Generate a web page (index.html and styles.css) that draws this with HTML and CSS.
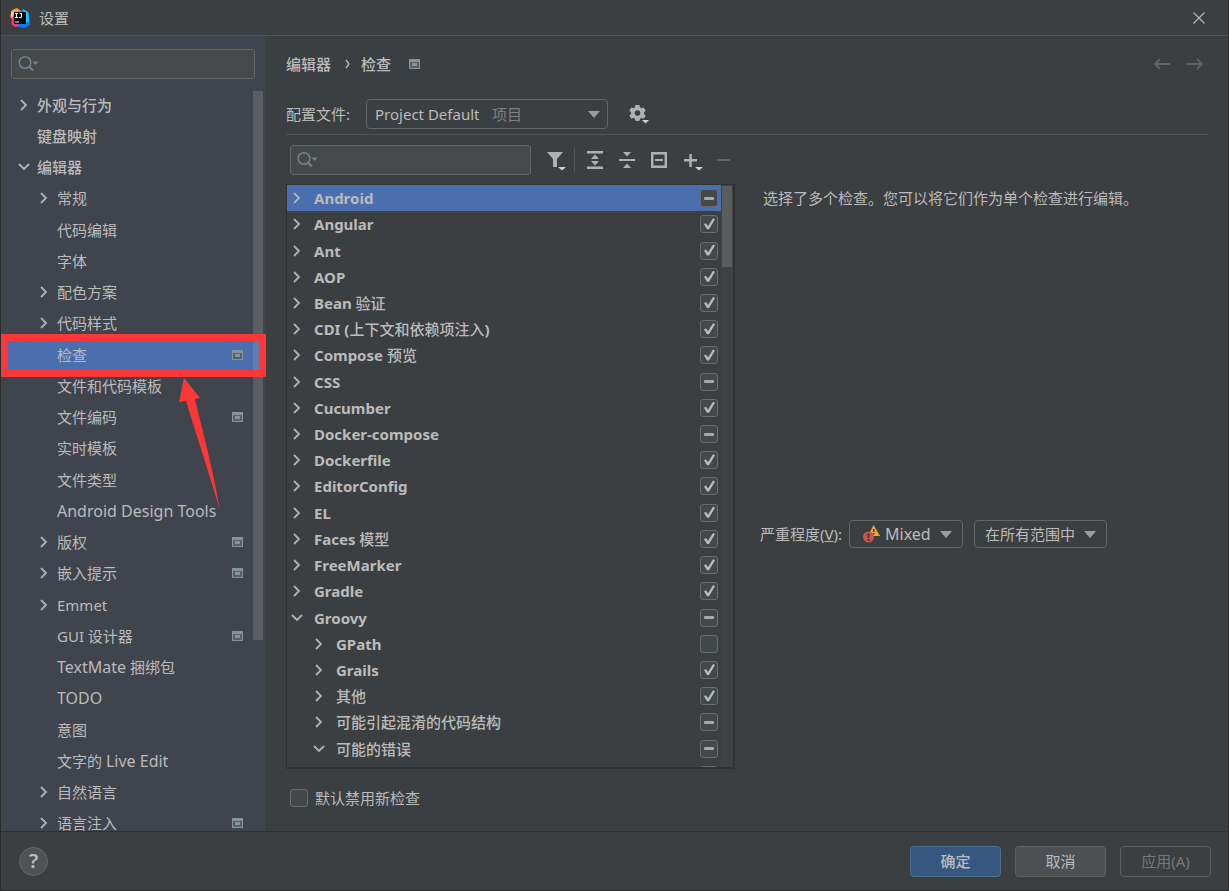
FILE: index.html
```html
<!DOCTYPE html>
<html lang="zh-CN">
<head>
<meta charset="utf-8">
<title>设置</title>
<link rel="stylesheet" href="styles.css">
</head>
<body>
<svg class="defs" aria-hidden="true">
  <symbol id="right" viewBox="0 0 16 16"><path d="M5 3l5 5-5 5" fill="none" stroke="currentColor" stroke-width="1.800"/></symbol>
  <symbol id="down" viewBox="0 0 16 16"><path d="M3 5l5 5 5-5" fill="none" stroke="currentColor" stroke-width="1.800"/></symbol>
  <symbol id="project" viewBox="0 0 11 10"><path d="M0 0h11v10H0z" fill="#87939a"/><path d="M1 3h9v6H1z" fill="#56616a"/><path d="M3 4h5v3H3z" fill="#87939a"/></symbol>
  <symbol id="search" viewBox="0 0 22 18"><circle cx="7" cy="7.500" r="5.800" fill="none" stroke="currentColor" stroke-width="1.500"/><path d="M11 11.500l4 4" stroke="currentColor" stroke-width="2"/><path d="M14.500 6.500h6l-3 3.500z" fill="currentColor"/></symbol>
  <symbol id="arrow" viewBox="0 0 12 7"><path d="M0 0h12L6 7z" fill="#9a9da0"/></symbol>
</svg>
<div class="window">
  <header class="titlebar">
    <svg class="logo" viewBox="0 0 20 20" aria-hidden="true">
      <path d="M2 2l5-2 4 3-2 8-9-2z" fill="#fb9b3a"/><path d="M0 8l5-3 5 8 1 5-6 1-4-3 1-3z" fill="#ff2d72"/><path d="M1 3l3 2-1 4-2 1z" fill="#ffd35a"/><path d="M10 4l3-3 6 4 1 12-5 3-7-1z" fill="#087cfa"/><path d="M13 1l5 3 1 9-4 2z" fill="#23c5f4"/><path d="M4 4h12v12H4z" fill="#080609"/>
      <path d="M5 5.500h3M6.500 5.500v4M5 9.500h3M9.500 5.500h2v3q0 1.500-2.500 1M5 14h4" fill="none" stroke="#fff" stroke-width="1.100"/>
    </svg>
    <h1 class="title">设置</h1>
    <button class="icon-button close" aria-label="关闭"><svg width="12" height="12" viewBox="0 0 12 12"><path d="M.5.500l11 11M11.500.500l-11 11" stroke="#b4b4b4" stroke-width="1.200"/></svg></button>
  </header>

  <nav class="sidebar" aria-label="设置类别">
    <div class="search sidebar-search"><svg class="search-icon"><use href="#search"/></svg><input type="text" aria-label="搜索设置"></div>
    <div class="sidebar-scroll">
      <ul class="categories">
        <li class="cat top"><svg class="chev"><use href="#right"/></svg><span>外观与行为</span></li>
        <li class="cat top"><i class="chev"></i><span>键盘映射</span></li>
        <li class="cat top"><svg class="chev"><use href="#down"/></svg><span>编辑器</span></li>
        <li class="cat"><svg class="chev"><use href="#right"/></svg><span>常规</span></li>
        <li class="cat"><i class="chev"></i><span>代码编辑</span></li>
        <li class="cat"><i class="chev"></i><span>字体</span></li>
        <li class="cat"><svg class="chev"><use href="#right"/></svg><span>配色方案</span></li>
        <li class="cat"><svg class="chev"><use href="#right"/></svg><span>代码样式</span></li>
        <li class="cat selected"><i class="chev"></i><span>检查</span><svg class="project"><use href="#project"/></svg></li>
        <li class="cat"><i class="chev"></i><span>文件和代码模板</span></li>
        <li class="cat"><i class="chev"></i><span>文件编码</span><svg class="project"><use href="#project"/></svg></li>
        <li class="cat"><i class="chev"></i><span>实时模板</span></li>
        <li class="cat"><i class="chev"></i><span>文件类型</span></li>
        <li class="cat"><i class="chev"></i><span class="latin">Android Design Tools</span></li>
        <li class="cat"><svg class="chev"><use href="#right"/></svg><span>版权</span><svg class="project"><use href="#project"/></svg></li>
        <li class="cat"><svg class="chev"><use href="#right"/></svg><span>嵌入提示</span><svg class="project"><use href="#project"/></svg></li>
        <li class="cat"><svg class="chev"><use href="#right"/></svg><span>Emmet</span></li>
        <li class="cat"><i class="chev"></i><span>GUI 设计器</span><svg class="project"><use href="#project"/></svg></li>
        <li class="cat"><i class="chev"></i><span><span class="latin">TextMate</span> 捆绑包</span></li>
        <li class="cat"><i class="chev"></i><span class="latin">TODO</span></li>
        <li class="cat"><i class="chev"></i><span>意图</span></li>
        <li class="cat"><i class="chev"></i><span>文字的 <span class="latin">Live Edit</span></span></li>
        <li class="cat"><svg class="chev"><use href="#right"/></svg><span>自然语言</span></li>
        <li class="cat"><svg class="chev"><use href="#right"/></svg><span>语言注入</span><svg class="project"><use href="#project"/></svg></li>
      </ul>
      <div class="sidebar-thumb"></div>
    </div>
  </nav>

  <main class="content">
    <div class="crumbs">
      <span>编辑器</span>
      <svg width="6" height="10" viewBox="0 0 6 10"><path d="M1 1l3 4-3 4" fill="none" stroke="#bbb" stroke-width="1.300"/></svg>
      <span>检查</span>
      <svg class="project crumb-project"><use href="#project"/></svg>
      <div class="history">
        <button class="icon-button" aria-label="后退" disabled><svg width="17" height="12" viewBox="0 0 17 12"><path d="M17 6H2M7 1L2 6l5 5" fill="none" stroke="#616365" stroke-width="2"/></svg></button>
        <button class="icon-button" aria-label="前进" disabled><svg width="17" height="12" viewBox="0 0 17 12"><path d="M0 6h15M10 1l5 5-5 5" fill="none" stroke="#616365" stroke-width="2"/></svg></button>
      </div>
    </div>

    <div class="profile">
      <label for="profile">配置文件:</label>
      <div class="combo profile-combo">
        <select id="profile"><option>Project Default</option></select>
        <span class="combo-hint">项目</span>
        <svg class="combo-arrow"><use href="#arrow"/></svg>
      </div>
      <button class="icon-button" aria-label="配置文件操作"><svg width="22" height="20" viewBox="0 0 22 20"><path fill="#afb1b3" fill-rule="evenodd" d="M6.500 1h4l.5 2.300 1.500.9 2.300-.8 1.900 3.300-1.700 1.500v1.700l1.700 1.500-1.900 3.300-2.300-.8-1.500.9-.5 2.200h-4L6 14.800l-1.500-.9-2.300.8L.3 11.400 2 9.900V8.200L.3 6.700l1.900-3.300 2.300.8L6 3.300zM8.500 6.200a2.800 2.800 0 100 5.600 2.800 2.800 0 000-5.600z"/><path d="M12 15.500h9l-4.500 4.500z" fill="#d0d2d3" stroke="#3c3f41"/></svg></button>
    </div>

    <div class="workspace">
      <section class="inspections">
        <div class="toolbar">
          <div class="search filter"><svg class="search-icon"><use href="#search"/></svg><input type="text" aria-label="搜索检查"></div>
          <button class="icon-button funnel" aria-label="过滤"><svg width="20" height="20" viewBox="0 0 20 20"><path d="M0 2h16l-6 7v8H6V9z" fill="#afb1b3"/><path d="M11 17h8l-4 3.500z" fill="#d0d2d3"/></svg></button>
          <span class="separator"></span>
          <button class="icon-button" aria-label="全部展开"><svg width="16" height="18" viewBox="0 0 16 18"><path d="M0 0h16v2.500H0zM0 15.500h16V18H0zM8 3.500l4 4.500H4zM8 14.500l4-4.500H4z" fill="#afb1b3"/></svg></button>
          <button class="icon-button" aria-label="全部折叠"><svg width="16" height="18" viewBox="0 0 16 18"><path d="M0 8h16v2H0zM4 1h8L8 5.500zM4 17h8L8 12.500z" fill="#afb1b3"/></svg></button>
          <button class="icon-button" aria-label="重置为空"><svg width="16" height="16" viewBox="0 0 16 16"><path d="M1.200 1.200h13.600v13.600H1.200z" fill="none" stroke="#afb1b3" stroke-width="2.400"/><path d="M4 7h8v2H4z" fill="#afb1b3"/></svg></button>
          <button class="icon-button add" aria-label="添加"><svg width="19" height="20" viewBox="0 0 19 20"><path d="M0 9h13v2.500H0zM5.300 4h2.500v13H5.300z" fill="#afb1b3"/><path d="M11 17h8l-4 3.500z" fill="#d0d2d3"/></svg></button>
          <button class="icon-button" aria-label="移除" disabled><svg width="13" height="2" viewBox="0 0 13 2"><path d="M0 0h13v2H0z" fill="#616365"/></svg></button>
        </div>

        <div class="tree-box">
          <ul class="tree">
            <li class="row selected"><svg class="chev"><use href="#right"/></svg><label for="i1">Android</label><input id="i1" type="checkbox" class="box mixed"></li>
            <li class="row"><svg class="chev"><use href="#right"/></svg><label for="i2">Angular</label><input id="i2" type="checkbox" class="box" checked></li>
            <li class="row"><svg class="chev"><use href="#right"/></svg><label for="i3">Ant</label><input id="i3" type="checkbox" class="box" checked></li>
            <li class="row"><svg class="chev"><use href="#right"/></svg><label for="i4">AOP</label><input id="i4" type="checkbox" class="box" checked></li>
            <li class="row"><svg class="chev"><use href="#right"/></svg><label for="i5">Bean <span class="cjk">验证</span></label><input id="i5" type="checkbox" class="box" checked></li>
            <li class="row"><svg class="chev"><use href="#right"/></svg><label for="i6">CDI (<span class="cjk">上下文和依赖项注入</span>)</label><input id="i6" type="checkbox" class="box" checked></li>
            <li class="row"><svg class="chev"><use href="#right"/></svg><label for="i7">Compose <span class="cjk">预览</span></label><input id="i7" type="checkbox" class="box" checked></li>
            <li class="row"><svg class="chev"><use href="#right"/></svg><label for="i8">CSS</label><input id="i8" type="checkbox" class="box mixed"></li>
            <li class="row"><svg class="chev"><use href="#right"/></svg><label for="i9">Cucumber</label><input id="i9" type="checkbox" class="box" checked></li>
            <li class="row"><svg class="chev"><use href="#right"/></svg><label for="i10">Docker-compose</label><input id="i10" type="checkbox" class="box mixed"></li>
            <li class="row"><svg class="chev"><use href="#right"/></svg><label for="i11">Dockerfile</label><input id="i11" type="checkbox" class="box" checked></li>
            <li class="row"><svg class="chev"><use href="#right"/></svg><label for="i12">EditorConfig</label><input id="i12" type="checkbox" class="box" checked></li>
            <li class="row"><svg class="chev"><use href="#right"/></svg><label for="i13">EL</label><input id="i13" type="checkbox" class="box" checked></li>
            <li class="row"><svg class="chev"><use href="#right"/></svg><label for="i14">Faces <span class="cjk">模型</span></label><input id="i14" type="checkbox" class="box" checked></li>
            <li class="row"><svg class="chev"><use href="#right"/></svg><label for="i15">FreeMarker</label><input id="i15" type="checkbox" class="box" checked></li>
            <li class="row"><svg class="chev"><use href="#right"/></svg><label for="i16">Gradle</label><input id="i16" type="checkbox" class="box" checked></li>
            <li class="row"><svg class="chev"><use href="#down"/></svg><label for="i17">Groovy</label><input id="i17" type="checkbox" class="box mixed"></li>
            <li class="row child"><svg class="chev"><use href="#right"/></svg><label for="i18">GPath</label><input id="i18" type="checkbox" class="box"></li>
            <li class="row child"><svg class="chev"><use href="#right"/></svg><label for="i19">Grails</label><input id="i19" type="checkbox" class="box" checked></li>
            <li class="row child"><svg class="chev"><use href="#right"/></svg><label for="i20" class="cjk">其他</label><input id="i20" type="checkbox" class="box" checked></li>
            <li class="row child"><svg class="chev"><use href="#right"/></svg><label for="i21" class="cjk">可能引起混淆的代码结构</label><input id="i21" type="checkbox" class="box mixed"></li>
            <li class="row child"><svg class="chev"><use href="#down"/></svg><label for="i22" class="cjk">可能的错误</label><input id="i22" type="checkbox" class="box mixed"></li>
            <li class="row child"><label></label><input type="checkbox" class="box" aria-label="检查项"></li>
          </ul>
          <div class="track"><div class="thumb"></div></div>
        </div>

        <div class="disable-new"><input id="disable-new" type="checkbox" class="box"><label for="disable-new">默认禁用新检查</label></div>
      </section>

      <section class="details">
        <p class="message">选择了多个检查。您可以将它们作为单个检查进行编辑。</p>
        <div class="severity">
          <label for="severity">严重程度(<u>V</u>):</label>
          <div class="combo severity-combo">
            <svg class="mixed-icon" viewBox="0 0 17 18" aria-hidden="true"><path d="M10.500 0L17 11H10L7 7z" fill="#f0a732"/><path d="M10 4h1.500v3H10zM10 8h1.500v1.500H10z" fill="#3c3f41"/><circle cx="5.500" cy="12" r="5.500" fill="#c75450"/><path d="M4.500 8.500h2V13h-2zM4.500 14h2v2h-2z" fill="#3c3f41"/></svg>
            <select id="severity" class="latin"><option>Mixed</option></select>
            <svg class="combo-arrow"><use href="#arrow"/></svg>
          </div>
          <div class="combo scope-combo">
            <select aria-label="范围"><option>在所有范围中</option></select>
            <svg class="combo-arrow"><use href="#arrow"/></svg>
          </div>
        </div>
      </section>
    </div>
  </main>

  <footer class="footer">
    <button class="help" aria-label="帮助">?</button>
    <button class="button primary">确定</button>
    <button class="button">取消</button>
    <button class="button" disabled>应用(A)</button>
  </footer>

  <svg class="callout" viewBox="0 0 265 178" aria-hidden="true"><path d="M3.500 3.500h258v36h-258z" fill="none" stroke="#fc3737" stroke-width="7"/><path d="M183 44l16 20-5 1c6 26 17 65 25 111-10-33-23-74-34-109l-7 1z" fill="#fc3737"/></svg>
</div>
</body>
</html>
```
FILE: styles.css
```css
* { box-sizing: border-box; }
body, h1, p, ul { margin: 0; padding: 0; }
body, button, input, select {
  font: 15px/20px "Noto Sans", "Noto Sans CJK SC", sans-serif;
  color: #bbb;
}
ul { list-style: none; }
svg { display: block; flex: none; }
.defs { display: none; }
.latin { font-size: 16px; }

.window {
  position: relative;
  display: grid;
  grid-template: 36px minmax(0, 1fr) 59px / 264px minmax(0, 1fr);
  height: 100vh;
  border: 1px solid #2b2b2b;
  border-top: 0;
  background: #3c3f41;
  overflow: hidden;
}

.titlebar {
  grid-column: 1 / -1;
  display: flex;
  align-items: center;
  gap: 9px;
  padding: 0 23px 0 9px;
  border-bottom: 1px solid #515355;
}
.logo { width: 20px; height: 20px; }
.title { font-size: 15px; font-weight: 400; }
.icon-button { display: block; flex: none; padding: 0; border: 0; background: none; }
.close { margin-left: auto; }

.sidebar {
  display: flex;
  flex-direction: column;
  gap: 10px;
  min-height: 0;
  padding-top: 13px;
  background: #40444c;
}
.search {
  display: flex;
  align-items: center;
  height: 30px;
  border: 1px solid #646464;
  border-radius: 3px;
  background: #45494a;
}
.sidebar-search { margin: 0 10px; flex: none; }
.search-icon { width: 22px; height: 18px; margin-left: 6px; color: #74828d; }
.search input { flex: 1; min-width: 0; border: 0; outline: 0; background: none; }

.sidebar-scroll { position: relative; flex: 1; min-height: 0; overflow: hidden; }
.categories {
  display: grid;
  grid-auto-rows: 1fr;
  height: calc(100% + 8px);
}
.cat { display: flex; align-items: center; padding-left: 35px; min-height: 0; white-space: nowrap; }
.cat.top { padding-left: 15px; font-weight: 500; }
.cat.selected, .row.selected { background: #4b6eaf; }
.chev { flex: none; width: 16px; height: 16px; margin-right: 5px; color: #afb1b3; }
.project { width: 11px; height: 10px; margin-left: auto; margin-right: 22px; }
.sidebar-thumb {
  position: absolute;
  top: 2px;
  right: 2px;
  width: 10px;
  height: 74%;
  background: rgb(166 166 166 / 26%);
}

.content {
  display: flex;
  flex-direction: column;
  min-width: 0;
  min-height: 0;
  padding: 18px 20px 20px 21px;
}
.crumbs { display: flex; align-items: center; height: 20px; font-weight: 500; }
.crumbs > svg:first-of-type { margin: 0 10px 0 14px; }
.crumbs .crumb-project { margin: 0 auto 0 18px; }
.history { display: flex; gap: 17px; margin-right: 4px; }

.profile {
  display: flex;
  align-items: center;
  height: 61px;
  padding-top: 25px;
  padding-bottom: 5px;
  border-bottom: 1px solid #515355;
}
.profile label { width: 80px; }
.profile .icon-button { margin-left: 21px; }

.combo { display: grid; align-items: center; }
.combo > * { grid-area: 1 / 1; }
.combo select {
  width: 100%;
  height: 28px;
  padding: 0 8px;
  border: 1px solid #646464;
  border-radius: 4px;
  appearance: none;
  background: #3c3f41;
}
.combo-arrow { width: 12px; height: 7px; justify-self: end; margin-right: 11px; pointer-events: none; }
.profile-combo { width: 242px; }
.combo.profile-combo select { height: 30px; }
.combo-hint { justify-self: end; margin-right: 86px; color: #808080; pointer-events: none; }
.combo-hint + .combo-arrow { margin-right: 8px; }

.workspace {
  flex: 1;
  display: grid;
  grid-template-columns: 449px minmax(0, 1fr);
  min-height: 0;
}
.inspections { display: flex; flex-direction: column; min-height: 0; }
.toolbar { display: flex; align-items: center; gap: 16px; padding: 10px 3px 9px 4px; height: 49px; }
.filter { width: 241px; }
.funnel { margin-right: -9px; }
.separator { width: 1px; height: 24px; margin-right: -4px; background: #555759; }
.add { margin-left: 1px; margin-right: -2px; }

.tree-box {
  display: flex;
  flex: 1;
  min-height: 0;
  border: 1px solid #323232;
  border-right-width: 2px;
  border-bottom-width: 2px;
  overflow: hidden;
}
.tree {
  flex: 1;
  display: grid;
  grid-auto-rows: 1fr;
  height: calc(100% + 21px);
}
.row {
  display: flex;
  align-items: center;
  min-height: 0;
  padding-left: 2px;
  padding-right: 3px;
  font-weight: 700;
  white-space: nowrap;
}
.row .cjk { font-weight: 500; }
.row .chev { margin-right: 9px; }
.row.child { padding-left: 24px; }
.row label { flex: 1; }
.box {
  flex: none;
  display: grid;
  width: 18px;
  height: 18px;
  margin: 0;
  border: 1px solid #6b6b6b;
  border-radius: 3px;
  appearance: none;
  background: #43494a;
}
.box:checked::before {
  content: "";
  background: #bbb;
  clip-path: polygon(3px 8px, 5px 7px, 7px 10px, 12px 2px, 14px 3px, 8px 13px, 6px 13px);
}
.box.mixed::before {
  content: "";
  width: 10px;
  height: 3px;
  place-self: center;
  border-radius: 1px;
  background: #a7a7a7;
}
.track { width: 12px; padding: 1px; background: #3f4244; }
.thumb { height: 14%; background: #595d5e; }

.disable-new { display: flex; align-items: center; gap: 7px; padding: 15px 0 0 4px; height: 42px; }

.details { display: flex; flex-direction: column; gap: 312px; padding: 53px 0 0 25px; }
.message { padding-left: 3px; }
.severity { display: flex; align-items: center; }
.severity label { margin-right: 7px; white-space: nowrap; }
.severity-combo { width: 114px; margin-right: 11px; }
.severity-combo select { padding-left: 35px; }
.mixed-icon { z-index: 1; width: 17px; height: 18px; margin-left: 14px; pointer-events: none; }
.scope-combo { width: 133px; }
.scope-combo select { padding-left: 10px; }

.footer {
  grid-column: 1 / -1;
  display: flex;
  align-items: center;
  gap: 14px;
  padding: 0 17px 0 18px;
  border-top: 1px solid #2f3133;
}
.help {
  width: 29px;
  height: 29px;
  margin-right: auto;
  padding: 0;
  border: 1px solid #65696b;
  border-radius: 50%;
  background: #4f5355;
  font-size: 20px;
  font-weight: 600;
}
.button {
  width: 91px;
  height: 31px;
  padding: 0;
  border: 1px solid #5e6060;
  border-radius: 4px;
  background: #4c5052;
}
.button.primary { border-color: #4c708c; background: #365880; font-weight: 500; }
.button:disabled { background: none; color: #777; }

.callout { position: absolute; left: 0; top: 334px; width: 265px; height: 178px; pointer-events: none; }
```
